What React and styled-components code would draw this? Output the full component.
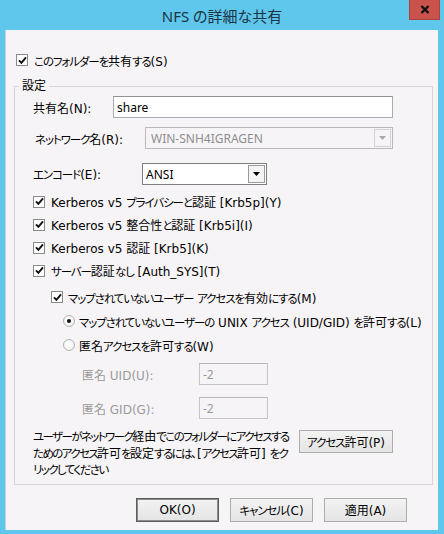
import React from "react";
import styled, { createGlobalStyle } from "styled-components";

const GlobalStyle = createGlobalStyle`
  html, body {
    margin: 0;
    padding: 0;
  }
  body {
    font-family: "DejaVu Sans", "Noto Sans CJK JP", sans-serif;
    font-feature-settings: "palt";
    font-size: 12px;
    color: #000;
    background: #5fc7ec;
  }
`;

// Meiryo UI draws kana much narrower than kanji; tighten kana runs to match
const KANA_RUN = /([\u3040-\u30ff]+)/;

function JP({ children }) {
  return String(children)
    .split(KANA_RUN)
    .map((part, i) => (i % 2 ? <Kana key={i}>{part}</Kana> : part));
}

function CheckBox({ checked }) {
  return (
    <CheckBoxBox>
      {checked && (
        <svg width="9" height="9" viewBox="0 0 9 9">
          <path d="M1 4.3 L3.4 6.8 L8 1.4" stroke="#111" strokeWidth="1.9" fill="none" />
        </svg>
      )}
    </CheckBoxBox>
  );
}

function Radio({ checked }) {
  return <RadioCircle>{checked && <RadioDot />}</RadioCircle>;
}

function DropArrow({ disabled }) {
  return (
    <ArrowButton $disabled={disabled}>
      <svg width="7" height="4" viewBox="0 0 7 4">
        <path d="M0 0 H7 L3.5 4 Z" fill={disabled ? "#a8a8a8" : "#000"} />
      </svg>
    </ArrowButton>
  );
}

function App() {
  return (
    <>
      <GlobalStyle />
      <Window>
        <TitleBar>
          <Title>NFS の詳細な共有</Title>
          <CloseButton>
            <svg width="10" height="9" viewBox="0 0 10 9">
              <path d="M1.5 1 L8.5 8 M8.5 1 L1.5 8" stroke="#111" strokeWidth="2.4" />
            </svg>
          </CloseButton>
        </TitleBar>

        <Client>
          <ShareRow>
            <CheckBox checked />
            <span><JP>このフォルダーを共有する(S)</JP></span>
          </ShareRow>

          <GroupBox>
            <Legend>設定</Legend>
            <GroupBody>
              <FieldRow>
                <FieldLabel $width={80}><JP>共有名(N):</JP></FieldLabel>
                <TextInput $grow>share</TextInput>
              </FieldRow>
              <FieldRow $top={9}>
                <FieldLabel $width={110} $indent={2}><JP>ネットワーク名(R):</JP></FieldLabel>
                <Combo $grow $disabled>
                  <ComboText $disabled>WIN-SNH4IGRAGEN</ComboText>
                  <DropArrow disabled />
                </Combo>
              </FieldRow>
              <FieldRow $top={14}>
                <FieldLabel $width={109}><JP>エンコード(E):</JP></FieldLabel>
                <Combo $width={125}>
                  <ComboText>ANSI</ComboText>
                  <DropArrow />
                </Combo>
              </FieldRow>

              <CheckList>
                <CheckRow>
                  <CheckBox checked />
                  <span><JP>Kerberos v5 プライバシーと認証 [Krb5p](Y)</JP></span>
                </CheckRow>
                <CheckRow>
                  <CheckBox checked />
                  <span><JP>Kerberos v5 整合性と認証 [Krb5i](I)</JP></span>
                </CheckRow>
                <CheckRow>
                  <CheckBox checked />
                  <span><JP>Kerberos v5 認証 [Krb5](K)</JP></span>
                </CheckRow>
                <CheckRow>
                  <CheckBox checked />
                  <span><JP>サーバー認証なし [Auth_SYS](T)</JP></span>
                </CheckRow>
              </CheckList>

              <SubList>
                <SubRow $indent={18}>
                  <CheckBox checked />
                  <span><JP>マップされていないユーザー アクセスを有効にする(M)</JP></span>
                </SubRow>
                <SubRow $indent={30} $gap={4}>
                  <Radio checked />
                  <span><JP>マップされていないユーザーの UNIX アクセス (UID/GID) を許可する(L)</JP></span>
                </SubRow>
                <SubRow $indent={30} $gap={4}>
                  <Radio />
                  <span><JP>匿名アクセスを許可する(W)</JP></span>
                </SubRow>
              </SubList>

              <FieldRow $top={6}>
                <FieldLabel $width={117} $indent={49} $disabled>匿名 UID(U):</FieldLabel>
                <TextInput $width={69} $disabled>-2</TextInput>
              </FieldRow>
              <FieldRow $top={12}>
                <FieldLabel $width={117} $indent={49} $disabled>匿名 GID(G):</FieldLabel>
                <TextInput $width={69} $disabled>-2</TextInput>
              </FieldRow>

              <NoticeRow>
                <NoticeText>
                  <JP>ユーザーがネットワーク経由でこのフォルダーにアクセスする</JP>
                  <br />
                  <JP>ためのアクセス許可を設定するには、[アクセス許可] をク</JP>
                  <br />
                  <JP>リックしてください</JP>
                </NoticeText>
                <PushButton $width={94} $height={23}><JP>アクセス許可(P)</JP></PushButton>
              </NoticeRow>
            </GroupBody>
          </GroupBox>

          <ButtonBar>
            <PushButton $default>OK(O)</PushButton>
            <PushButton><JP>キャンセル(C)</JP></PushButton>
            <PushButton>適用(A)</PushButton>
          </ButtonBar>
        </Client>
      </Window>
    </>
  );
}

const Kana = styled.span`
  font-size: 11.5px;
  letter-spacing: var(--kana-ls, -1.1px);
`;

const Window = styled.div`
  width: 444px;
  height: 534px;
  display: flex;
  flex-direction: column;
  background: #5fc7ec;
  overflow: hidden;
`;

const TitleBar = styled.div`
  height: 30px;
  flex: none;
  display: grid;
  grid-template-columns: 1fr auto 1fr;
`;

const Title = styled.div`
  grid-column: 2;
  align-self: center;
  font-family: "Noto Sans", "Noto Sans CJK JP", sans-serif;
  font-size: 15px;
  color: #1c3443;
  white-space: nowrap;
  margin-top: 1px;
`;

const CloseButton = styled.div`
  grid-column: 3;
  justify-self: end;
  align-self: start;
  width: 31px;
  height: 20px;
  margin-right: 4px;
  box-sizing: border-box;
  background: #c9534c;
  border: 1px solid #a84440;
  border-top: none;
  display: flex;
  align-items: center;
  justify-content: center;
`;

const Client = styled.div`
  flex: 1;
  margin: 0 6px 4px 5px;
  background: #f7f4f7;
  border-left: 1px solid #c9d3d8;
  display: flex;
  flex-direction: column;
  padding: 21px 5px 0 8px;
`;

const ShareRow = styled.label`
  height: 18px;
  display: flex;
  align-items: center;
  gap: 6px;
  padding-left: 2px;
  white-space: nowrap;
`;

const GroupBox = styled.fieldset`
  margin: 9px 0 0 0;
  padding: 0;
  border: 1px solid #d3d6d8;
  min-width: 0;
`;

const Legend = styled.legend`
  margin-left: 4px;
  padding: 0 3px;
  line-height: 16px;
  height: 16px;
`;

const GroupBody = styled.div`
  padding: 2px 39px 5px 18px;
  display: flex;
  flex-direction: column;
`;

const FieldRow = styled.div`
  display: flex;
  align-items: center;
  height: 22px;
  margin-top: ${(p) => p.$top || 0}px;
`;

const FieldLabel = styled.span`
  flex: none;
  width: ${(p) => p.$width}px;
  padding-left: ${(p) => p.$indent || 0}px;
  color: ${(p) => (p.$disabled ? "#9a9a9a" : "#000")};
  white-space: nowrap;
`;

const TextInput = styled.div`
  box-sizing: border-box;
  height: 22px;
  ${(p) => (p.$grow ? "flex: 1;" : `width: ${p.$width}px;`)}
  font-family: "Noto Sans", sans-serif;
  background: ${(p) => (p.$disabled ? "#f7f4f7" : "#fff")};
  border: 1px solid ${(p) => (p.$disabled ? "#c4c4c4" : "#a9abb1")};
  border-top-color: ${(p) => (p.$disabled ? "#b8b8b8" : "#8f9196")};
  color: ${(p) => (p.$disabled ? "#9a9a9a" : "#000")};
  padding: 0 3px;
  display: flex;
  align-items: center;
`;

const Combo = styled.div`
  box-sizing: border-box;
  height: 22px;
  ${(p) => (p.$grow ? "flex: 1;" : `width: ${p.$width}px;`)}
  background: ${(p) => (p.$disabled ? "#f7f4f7" : "#fff")};
  border: 1px solid ${(p) => (p.$disabled ? "#b9b9b9" : "#7f7f7f")};
  display: flex;
  align-items: center;
  padding: 1px;
`;

const ComboText = styled.span`
  flex: 1;
  font-family: "Noto Sans", sans-serif;
  padding-left: ${(p) => (p.$disabled ? 4 : 2)}px;
  color: ${(p) => (p.$disabled ? "#8e8e8e" : "#000")};
  white-space: nowrap;
`;

const ArrowButton = styled.span`
  box-sizing: border-box;
  width: 17px;
  height: 18px;
  border: 1px solid ${(p) => (p.$disabled ? "#d2d2d2" : "#9a9a9a")};
  background: ${(p) => (p.$disabled ? "#f7f4f7" : "#f4f4f4")};
  display: flex;
  align-items: center;
  justify-content: center;
`;

const CheckList = styled.div`
  margin-top: 5px;
  display: flex;
  flex-direction: column;
`;

const CheckRow = styled.label`
  height: 23px;
  display: flex;
  align-items: center;
  gap: 6px;
  white-space: nowrap;
`;

const SubList = styled.div`
  margin-top: 3px;
  display: flex;
  flex-direction: column;
`;

const SubRow = styled.label`
  height: 24px;
  display: flex;
  align-items: center;
  gap: ${(p) => p.$gap || 5}px;
  padding-left: ${(p) => p.$indent}px;
  white-space: nowrap;
`;

const CheckBoxBox = styled.span`
  box-sizing: border-box;
  flex: none;
  width: 12px;
  height: 12px;
  background: #fff;
  border: 1px solid #8a8a8a;
  display: flex;
  align-items: center;
  justify-content: center;
`;

const RadioCircle = styled.span`
  box-sizing: border-box;
  flex: none;
  width: 12px;
  height: 12px;
  border-radius: 50%;
  border: 1px solid #b3b3b3;
  background: radial-gradient(circle at 40% 40%, #ffffff, #ececec);
  display: flex;
  align-items: center;
  justify-content: center;
`;

const RadioDot = styled.span`
  width: 4px;
  height: 4px;
  border-radius: 50%;
  background: #111;
`;

const NoticeRow = styled.div`
  margin-top: 10px;
  display: flex;
  align-items: flex-start;
  gap: 4px;
`;

const NoticeText = styled.p`
  --kana-ls: -1.6px;
  flex: 1;
  margin: 0;
  line-height: 16.5px;
  white-space: nowrap;
`;

const PushButton = styled.button`
  box-sizing: border-box;
  flex: none;
  width: ${(p) => p.$width || 83}px;
  height: ${(p) => p.$height || 24}px;
  margin-top: 1px;
  padding: 0;
  font: inherit;
  color: #000;
  background: linear-gradient(#f3f3f3, #e4e4e4);
  border: 1px solid ${(p) => (p.$default ? "#5c5c5c" : "#adadad")};
  box-shadow: ${(p) => (p.$default ? "inset 0 0 0 1px #8c8c8c" : "none")};
`;

const ButtonBar = styled.div`
  margin-top: 12px;
  padding-right: 26px;
  display: flex;
  justify-content: flex-end;
  gap: 11px;
`;

export default App;
